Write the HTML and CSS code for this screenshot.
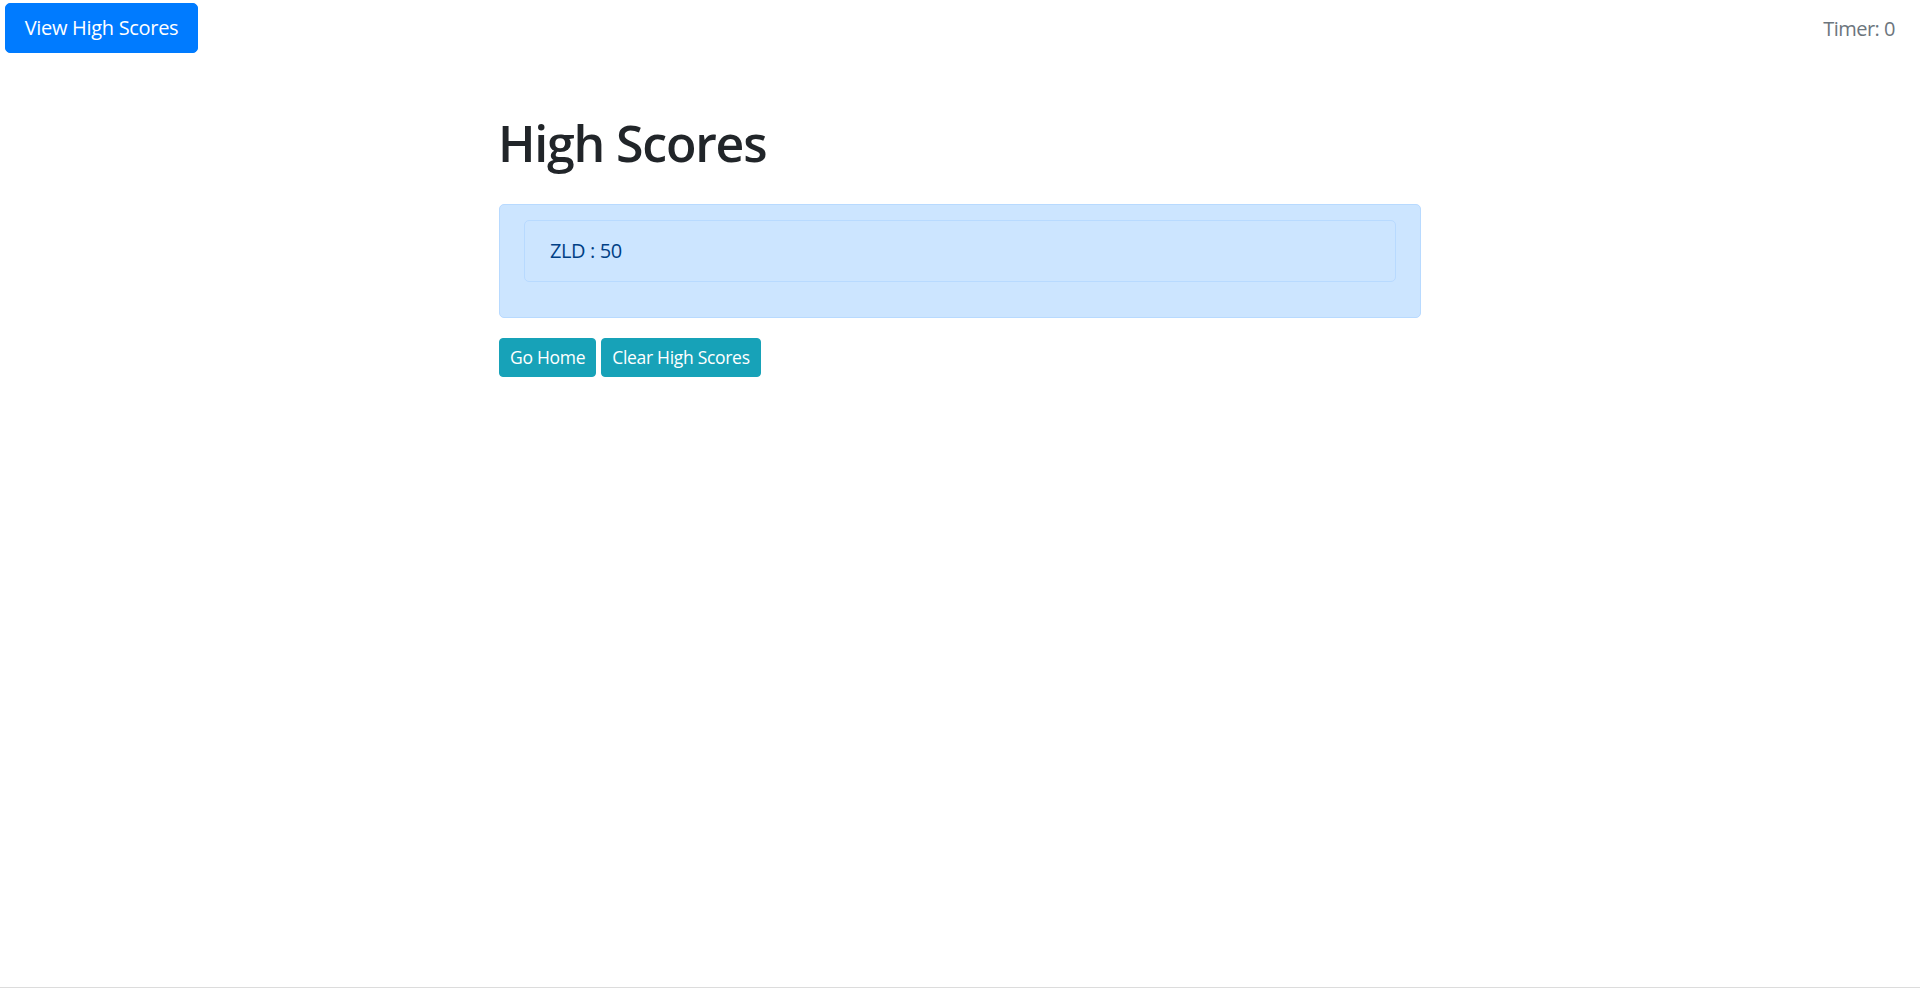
FILE: index.html
```html
<!DOCTYPE html>
<html lang="en">
<head>
<meta charset="utf-8">
<title>High Scores</title>
<link rel="stylesheet" href="styles.css">
</head>
<body>
<header class="topbar">
  <button class="btn btn-primary btn-view">View High Scores</button>
  <span class="timer">Timer: 0</span>
</header>
<main class="container">
  <h1 class="title">High Scores</h1>
  <div class="alert">
    <ul class="score-list">
      <li class="score-item">ZLD : 50</li>
    </ul>
  </div>
  <div class="actions">
    <button class="btn btn-info btn-sm">Go Home</button>
    <button class="btn btn-info btn-sm">Clear High Scores</button>
  </div>
</main>
<div class="bottom-line"></div>
</body>
</html>
```

FILE: styles.css
```css
html, body {
  margin: 0;
  padding: 0;
}
body {
  font-family: "Open Sans", "Noto Sans", "Liberation Sans", sans-serif;
  color: #212529;
  background: #fff;
  min-height: 988px;
}
.topbar {
  display: flex;
  justify-content: space-between;
  align-items: flex-start;
  padding: 3px 25px 0 5px;
}
.btn {
  font-family: inherit;
  border: 1px solid transparent;
  cursor: pointer;
  color: #fff;
  letter-spacing: -0.3px;
}
.btn-primary {
  background: #007bff;
  border-color: #007bff;
}
.btn-view {
  width: 193px;
  height: 50px;
  font-size: 20px;
  line-height: 28px;
  border-radius: 5px;
  padding: 0;
}
.timer {
  color: #6c757d;
  font-size: 20px;
  line-height: 28px;
  padding-top: 12px;
  letter-spacing: -0.5px;
}
.container {
  width: 922px;
  margin: 0 auto;
}
.title {
  font-size: 50px;
  font-weight: 600;
  line-height: 60px;
  margin: 60px 0 31px -1px;
  letter-spacing: -1.2px;
}
.alert {
  background: #cce5ff;
  border: 1px solid #b8daff;
  border-radius: 5px;
  padding: 15px 24px;
  color: #004085;
}
.score-list {
  list-style: none;
  margin: 0 0 20px;
  padding: 0;
}
.score-item {
  border: 1px solid #b8daff;
  border-radius: 5px;
  padding: 15px 25px;
  font-size: 20px;
  line-height: 30px;
  height: 30px;
  letter-spacing: -0.4px;
}
.actions {
  display: flex;
  gap: 5px;
  margin-top: 20px;
}
.btn-info {
  background: #17a2b8;
  border-color: #17a2b8;
}
.btn-sm {
  font-size: 17.5px;
  line-height: 27px;
  padding: 5px 10px;
  border-radius: 4px;
  height: 39px;
  letter-spacing: -0.3px;
}
.bottom-line {
  position: fixed;
  left: 0;
  right: 0;
  bottom: 0;
  height: 1px;
  background: #dcdcdc;
}
```
